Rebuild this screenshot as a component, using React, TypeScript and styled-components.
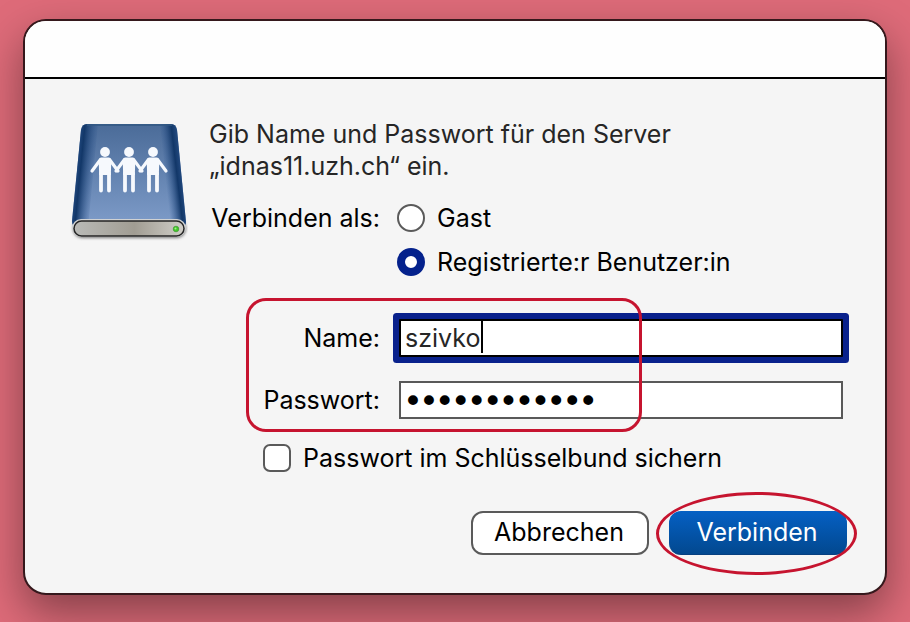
import React, { useState } from "react";
import styled, { createGlobalStyle, css } from "styled-components";

const GlobalStyle = createGlobalStyle`
  *, *::before, *::after { box-sizing: border-box; }
  body {
    margin: 0;
    background: #de6b79;
    font-family: Inter, "Liberation Sans", sans-serif;
    font-size: 25px;
    font-weight: 430;
    line-height: 32px;
    color: #000;
  }
`;

const Desktop = styled.main`
  min-height: 100vh;
  padding: 19px 23px 27px;
  overflow: hidden;
  background: #de6b79;
`;

const Dialog = styled.section`
  border: 2px solid #35181c;
  border-radius: 23px;
  background: #f5f5f5;
  box-shadow: 0 18px 44px rgba(0, 0, 0, 0.4);
`;

const TitleBar = styled.header`
  height: 58px;
  border-bottom: 2px solid #000;
  border-radius: 21px 21px 0 0;
  background: #fefefe;
`;

const Body = styled.form`
  display: grid;
  grid-template-columns: 118px 1fr;
  column-gap: 21px;
  padding: 39px 38px 38px 45px;
`;

const DriveIcon = styled.svg`
  width: 118px;
  height: 124px;
`;

const Content = styled.div`
  display: flex;
  flex-direction: column;
  padding-right: 4px;
`;

const Message = styled.p`
  margin: 0 0 20px;
  color: #262626;
`;

const Row = styled.div`
  display: grid;
  grid-template-columns: 171px 1fr;
  column-gap: 19px;
  align-items: center;
`;

const ConnectAs = styled(Row)`
  align-items: start;
`;

const RowLabel = styled.label`
  text-align: right;
  white-space: nowrap;
`;

const Options = styled.div`
  display: flex;
  flex-direction: column;
  gap: 12px;
`;

const Choice = styled.label`
  display: flex;
  align-items: center;
  gap: 12px;
  white-space: nowrap;
`;

const Radio = styled.input`
  appearance: none;
  flex: none;
  width: 28px;
  height: 28px;
  margin: 0 0 0 -2px;
  border: 2px solid #5a5a5a;
  border-radius: 50%;
  background: #fff;

  &:checked {
    border: 8px solid #04218c;
  }
`;

const Checkbox = styled.input`
  appearance: none;
  flex: none;
  width: 28px;
  height: 28px;
  margin: 0;
  border: 2px solid #5a5a5a;
  border-radius: 7px;
  background: #fff;

  &:checked {
    background: #04218c;
  }
`;

const Credentials = styled.div`
  position: relative;
  display: flex;
  flex-direction: column;
  gap: 24px;
  margin: 41px 0 23px;
`;

const Field = styled.div`
  position: relative;
`;

const TextBox = styled.input<{ $active?: boolean }>`
  display: block;
  width: 100%;
  height: 38px;
  padding: 0 4px;
  border: 2px solid #595959;
  border-radius: 0;
  background: #fff;
  color: #262626;
  font: inherit;
  outline: none;

  &[type="password"] {
    color: #000;
    font-family: "DejaVu Sans", sans-serif;
    font-size: 27px;
    -webkit-text-stroke: 2px #000;
  }

  ${(p) =>
    p.$active &&
    css`
      border-color: #000;
      box-shadow: 0 0 0 6px #09218c;
      border-radius: 1px;
    `}
`;

const Caret = styled.span`
  position: absolute;
  top: 2px;
  left: 82px;
  width: 2px;
  height: 32px;
  background: #000;
`;

const FieldHighlight = styled.span`
  position: absolute;
  top: -21px;
  left: 37px;
  width: 396px;
  height: 134px;
  border: 3px solid #c6142f;
  border-radius: 20px;
  pointer-events: none;
`;

const Remember = styled(Choice)`
  margin-left: 54px;
`;

const Actions = styled.footer`
  grid-column: 1 / -1;
  display: flex;
  justify-content: flex-end;
  gap: 20px;
  margin-top: 37px;
`;

const Button = styled.button<{ $primary?: boolean }>`
  display: block;
  width: 178px;
  height: 44px;
  padding: 0 2px 2px 0;
  border: 2px solid #5a5a5a;
  border-radius: 12px;
  background: #fff;
  color: #000;
  font: inherit;

  ${(p) =>
    p.$primary &&
    css`
      border: 0;
      border-bottom: 1px solid #063f80;
      background: linear-gradient(#0560c4, #02488f);
      color: #fff;
    `}
`;

const ActionSlot = styled.div`
  position: relative;
`;

const ActionHighlight = styled.span`
  position: absolute;
  inset: -19px -10px -20px -13px;
  border: 3px solid #c6142f;
  border-radius: 50%;
  pointer-events: none;
`;

function Person({ x }: { x: number }) {
  return (
    <g transform={`translate(${x} 0)`} fill="none" stroke="#f6f9fd" strokeLinecap="round" strokeLinejoin="round">
      <circle cx="0" cy="34" r="4.900" fill="#f6f9fd" stroke="none" />
      <path d="M-4 39.500H4Q6 40 6.300 43L5.800 57H-5.800L-6.300 43Q-6 40 -4 39.500Z" fill="#f6f9fd" stroke="none" />
      <path d="M-4.500 41.500L-13 53M4.500 41.500L13 53" strokeWidth="3.200" />
      <path d="M-4 55V72.500M4 55V72.500" strokeWidth="3.800" />
    </g>
  );
}

function ServerDrive() {
  return (
    <DriveIcon viewBox="0 0 118 124" role="img" aria-label="Server">
      <defs>
        <linearGradient id="top" x1="0" y1="0" x2="0" y2="1">
          <stop offset="0" stopColor="#4a6b98" />
          <stop offset="1" stopColor="#7f9dca" />
        </linearGradient>
        <linearGradient id="left" gradientUnits="userSpaceOnUse" x1="5" y1="56" x2="25" y2="58">
          <stop offset="0" stopColor="#234a80" />
          <stop offset="0.250" stopColor="#123768" />
          <stop offset="1" stopColor="#2f5790" stopOpacity="0" />
        </linearGradient>
        <linearGradient id="right" gradientUnits="userSpaceOnUse" x1="112" y1="56" x2="95" y2="58">
          <stop offset="0" stopColor="#234a80" />
          <stop offset="0.300" stopColor="#123768" />
          <stop offset="1" stopColor="#2f5790" stopOpacity="0" />
        </linearGradient>
        <linearGradient id="front" x1="0" y1="0" x2="1" y2="0">
          <stop offset="0" stopColor="#b9bab7" />
          <stop offset="0.550" stopColor="#a19d93" />
          <stop offset="1" stopColor="#d0cec8" />
        </linearGradient>
        <filter id="soft" x="-20%" y="-20%" width="140%" height="150%">
          <feGaussianBlur stdDeviation="1.500" />
        </filter>
      </defs>
      <rect x="3" y="101" width="113" height="19" rx="9" fill="#777" filter="url(#soft)" />
      <path d="M17 6H101Q106 6 107 12L116 104Q116 109 110 110H8Q2 109 2 103L11 12Q12 6 17 6Z" fill="url(#top)" />
      <path d="M17 6H28L18 110H8Q2 109 2 103L11 12Q12 6 17 6Z" fill="url(#left)" />
      <path d="M90 6H101Q106 6 107 12L116 104Q116 109 110 110H100Z" fill="url(#right)" />
      <path d="M17 7H102" stroke="#315782" strokeWidth="1.500" />
      <rect x="2" y="101" width="114" height="18" rx="9" fill="#d0d2d3" />
      <rect x="4" y="103" width="110" height="15" rx="7.500" fill="url(#front)" stroke="#252525" strokeWidth="1.500" />
      <circle cx="106" cy="111" r="2.800" fill="#42c72b" stroke="#378d2a" strokeWidth="0.600" />
      <circle cx="105.500" cy="110.400" r="1" fill="#a5f18a" />
      <Person x={35} />
      <Person x={59} />
      <Person x={83} />
    </DriveIcon>
  );
}

export default function App() {
  const [mode, setMode] = useState("user");
  const [name, setName] = useState("szivko");
  const [password, setPassword] = useState("abcdefghijkl");

  return (
    <>
      <GlobalStyle />
      <Desktop>
        <Dialog role="dialog" aria-label="Mit Server verbinden">
          <TitleBar />
          <Body onSubmit={(e) => e.preventDefault()}>
            <ServerDrive />
            <Content>
              <Message>
                Gib Name und Passwort für den Server
                <br />
                „idnas11.uzh.ch“ ein.
              </Message>
              <ConnectAs role="radiogroup" aria-labelledby="connect-as">
                <RowLabel as="span" id="connect-as">Verbinden als:</RowLabel>
                <Options>
                  <Choice>
                    <Radio type="radio" name="mode" checked={mode === "guest"} onChange={() => setMode("guest")} />
                    Gast
                  </Choice>
                  <Choice>
                    <Radio type="radio" name="mode" checked={mode === "user"} onChange={() => setMode("user")} />
                    Registrierte:r Benutzer:in
                  </Choice>
                </Options>
              </ConnectAs>
              <Credentials>
                <Row>
                  <RowLabel htmlFor="name">Name:</RowLabel>
                  <Field>
                    <TextBox id="name" $active value={name} onChange={(e) => setName(e.target.value)} />
                    <Caret />
                  </Field>
                </Row>
                <Row>
                  <RowLabel htmlFor="password">Passwort:</RowLabel>
                  <TextBox
                    id="password"
                    type="password"
                    value={password}
                    onChange={(e) => setPassword(e.target.value)}
                  />
                </Row>
                <FieldHighlight />
              </Credentials>
              <Remember>
                <Checkbox type="checkbox" />
                Passwort im Schlüsselbund sichern
              </Remember>
            </Content>
            <Actions>
              <Button type="button">Abbrechen</Button>
              <ActionSlot>
                <Button type="submit" $primary>Verbinden</Button>
                <ActionHighlight />
              </ActionSlot>
            </Actions>
          </Body>
        </Dialog>
      </Desktop>
    </>
  );
}
